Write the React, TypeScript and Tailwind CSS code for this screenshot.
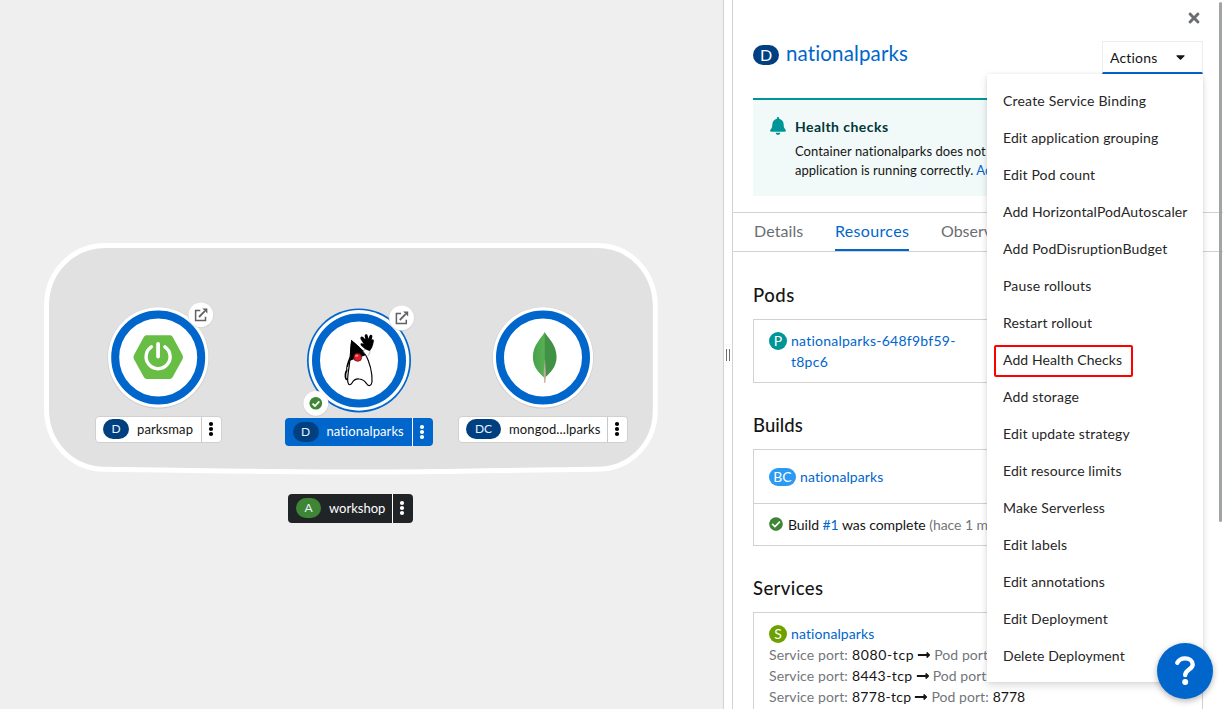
import React from "react";
import { FaBell, FaCheckCircle, FaTimes, FaCaretDown, FaLongArrowAltRight } from "react-icons/fa";

const menuItems: [string, string][] = [
  ["Create Service Binding", "tracking-[0.2px]"],
  ["Edit application grouping", "tracking-[0.12px]"],
  ["Edit Pod count", "tracking-[0.16px]"],
  ["Add HorizontalPodAutoscaler", "tracking-[0.1px]"],
  ["Add PodDisruptionBudget", "tracking-[0.15px]"],
  ["Pause rollouts", "tracking-[0.16px]"],
  ["Restart rollout", "tracking-[0.1px]"],
  ["Add Health Checks", "tracking-[0.1px]"],
  ["Add storage", "tracking-[0.18px]"],
  ["Edit update strategy", "tracking-[0.16px]"],
  ["Edit resource limits", "tracking-[0.1px]"],
  ["Make Serverless", "tracking-[0.15px]"],
  ["Edit labels", "tracking-[0.15px]"],
  ["Edit annotations", "tracking-[0.12px]"],
  ["Edit Deployment", "tracking-[0.1px]"],
  ["Delete Deployment", "tracking-[0.09px]"],
];

function Kebab() {
  return (
    <svg width="6" height="16" viewBox="0 0 6 16" fill="currentColor">
      <circle cx="3" cy="3" r="2.1" />
      <circle cx="3" cy="8" r="2.1" />
      <circle cx="3" cy="13" r="2.1" />
    </svg>
  );
}

function NodeLabel(props: { box: string; badge: string; code: string; name: string; nameClass: string; end: string }) {
  return (
    <div className={"absolute flex items-center rounded-[4px] text-[13px] " + props.box}>
      <span className={"ml-[7px] flex h-5 shrink-0 items-center justify-center rounded-full text-[12px] text-[#e8f1fa] " + props.badge}>{props.code}</span>
      <span className={"ml-2 flex-1 whitespace-nowrap " + props.nameClass}>{props.name}</span>
      <span className={"flex items-center justify-center self-stretch border-l " + props.end}>
        <Kebab />
      </span>
    </div>
  );
}

function OpenUrl({ x, y }: { x: number; y: number }) {
  return (
    <g transform={`translate(${x} ${y})`}>
      <circle r="13" fill="#c9c9c9" opacity="0.55" cy="0.5" />
      <circle r="12.4" fill="#fff" />
      <path d="M-0.5 -4.2H-5.2V5.7H4.7V2" fill="none" stroke="#5f6164" strokeWidth="1.5" />
      <path d="M-1.8 2.2L4 -3.6" stroke="#5f6164" strokeWidth="1.8" />
      <path d="M1.6 -6.4H6.6V-1.4Z" fill="#5f6164" />
    </g>
  );
}

function Ring({ x, y }: { x: number; y: number }) {
  return (
    <g transform={`translate(${x} ${y})`}>
      <circle r="50.8" cy="0.4" fill="#c4c4c4" opacity="0.7" />
      <circle r="50.2" fill="#fff" />
      <circle r="43" fill="#fff" stroke="#06c" strokeWidth="8" />
    </g>
  );
}

function Duke() {
  return (
    <g transform="translate(330 320) scale(0.33333)">
      <path d="M61 112C54 128 50 138 51 150C46 158 45 168 48 177L54 180" fill="none" stroke="#000" strokeWidth="5" />
      <path d="M51 140L56 142L52 156Z" fill="#bbb" />
      <path d="M65 63C61 90 62 110 57 142C54 162 51 178 54 188C56 197 62 195 66 189C72 178 80 176 88 177C98 178 104 182 109 190C115 201 124 198 126 186C127 165 124 135 104 98Z" fill="#fff" stroke="#000" strokeWidth="3.5" />
      <path d="M64 61C60 85 62 100 60 122C72 118 90 112 107 106C96 88 80 72 64 61Z" fill="#000" />
      <path d="M100 94C104 89 106 86 107 79L120 84C121 95 119 104 112 109" fill="#fff" stroke="#777" strokeWidth="1.5" />
      <path d="M106 88L97 80C90 76 90 69 96 70L101 72L92 58C89 51 95 47 100 52L106 58L104 48C104 41 112 41 113 47L116 56L118 48C121 41 128 44 127 50L125 60C129 55 133 59 131 66C129 78 125 88 118 93Z" fill="#000" />
      <circle cx="83" cy="112" r="12" fill="#e2202c" stroke="#3a0a0e" strokeWidth="2" />
      <ellipse cx="80" cy="107" rx="4.500" ry="3.500" fill="#ff8080" />
    </g>
  );
}

function Topology() {
  return (
    <div className="relative w-[723px] shrink-0 overflow-hidden bg-[#efefef]">
      <svg className="absolute inset-0" width="723" height="709" viewBox="0 0 723 709">
        <defs>
          <linearGradient id="leaf" x1="0" x2="1">
            <stop offset="0" stopColor="#47a148" />
            <stop offset="0.48" stopColor="#58b055" />
            <stop offset="0.52" stopColor="#419247" />
            <stop offset="1" stopColor="#3f9143" />
          </linearGradient>
        </defs>
        <path
          d="M46.5 306C46.5 272 72 245.5 106 245.5H597C630 245.5 655 272 655.300 306V411C655 444 630 469 597 469.300C520 470 440 472 359 472C270 472 180 470 104 469.300C72 469 46.500 443 46.500 409Z"
          fill="#e1e1e1"
          stroke="#fff"
          strokeWidth="5"
        />
        <Ring x={158.2} y={357.4} />
        <path d="M147 335.200H169.500C171 335.200 172 335.800 172.700 337L182.500 355C183.100 356.200 183.100 358 182.500 359.200L172.700 377C172 378.300 171 378.900 169.500 378.900H147C145.500 378.900 144.500 378.300 143.800 377L134 359.200C133.400 358 133.400 356.200 134 355L143.800 337C144.500 335.800 145.500 335.200 147 335.200Z" fill="#68bd45" />
        <path d="M151.300 346.800A12 12 0 1 0 164.900 346.800" fill="none" stroke="#fff" strokeWidth="3.400" strokeLinecap="round" />
        <path d="M158.100 343.800V356.500" stroke="#fff" strokeWidth="3.800" strokeLinecap="round" />

        <circle cx="359" cy="360.400" r="52" fill="#06c" />
        <circle cx="359" cy="360.400" r="50.300" fill="#fff" />
        <circle cx="359" cy="360.400" r="43" fill="#fff" stroke="#06c" strokeWidth="8" />
        <Duke />

        <Ring x={543} y={357.4} />
        <path d="M544.600 332C547 337 556.600 344 556.600 357C556.600 367 550 373 545.200 377.500H544.200C539 373 532.900 367 532.900 357C532.900 344 542 338 544.600 332Z" fill="url(#leaf)" />
        <path d="M543.700 372L544.300 383H545.400L545.900 375L545 360H544.700Z" fill="#bfae98" />

        <OpenUrl x={200.8} y={314.8} />
        <OpenUrl x={401.600} y={317.800} />
        <circle cx="315.800" cy="403.800" r="13" fill="#c9c9c9" opacity="0.550" />
        <circle cx="315.800" cy="403.300" r="12.400" fill="#fff" />
        <circle cx="315.800" cy="403.300" r="6.300" fill="#3e8635" />
        <path d="M312.500 403.600L315 406L319.300 401.300" fill="none" stroke="#fff" strokeWidth="1.800" />
      </svg>
      <NodeLabel box="left-[95px] top-[415.5px] h-[27px] w-[126.500px] border border-[#d0d0d0] bg-white text-[#151515]" badge="w-[26px] bg-[#004080]" code="D" name="parksmap" nameClass="pt-px tracking-[0.12px]" end="w-5 border-[#c8c8c8] pr-px text-black" />
      <NodeLabel box="left-[284.5px] top-[418px] h-[28px] w-[148.5px] bg-[#06c] pl-px text-white" badge="w-[26px] bg-[#004080]" code="D" name="nationalparks" nameClass="tracking-[0.08px]" end="w-[21px] border-white pr-[3px] text-white" />
      <NodeLabel box="left-[458px] top-[415.5px] h-[27px] w-[170px] border border-[#d0d0d0] bg-white text-[#151515]" badge="w-[35px] bg-[#004080]" code="DC" name="mongod...lparks" nameClass="pt-px tracking-[0.12px]" end="w-5 border-[#c8c8c8] pr-px text-black" />
      <NodeLabel box="left-[288px] top-[493.5px] h-[29.5px] w-[125px] bg-[#212427] pl-px text-white" badge="w-[25px] bg-[#3e8635]" code="A" name="workshop" nameClass="" end="w-[21px] border-white pr-[3px] text-white" />
    </div>
  );
}

function Section({ title, className, titleClass, children }: { title: string; className: string; titleClass: string; children: React.ReactNode }) {
  return (
    <section className={className}>
      <h2 className={"h-[27px] text-[18.5px] leading-[27px] font-medium text-[#151515] " + titleClass}>{title}</h2>
      <div className="mt-[10px] border border-[#d2d2d2]">{children}</div>
    </section>
  );
}

function Badge({ className, children }: { className: string; children: string }) {
  return <span className={"flex h-[18px] shrink-0 items-center justify-center rounded-full text-[14px] leading-none text-white " + className}>{children}</span>;
}

function PortRow({ port, name, nameClass }: { port: string; name: string; nameClass: string }) {
  return (
    <div className="flex h-[21px] items-center whitespace-nowrap text-[#72767b]">
      <span className="tracking-[0.1px]">Service port:</span>
      <span className={"ml-1 text-[#151515] " + nameClass}>{name}</span>
      <FaLongArrowAltRight className="mr-[3px] ml-[3px] h-[14px] w-[14px] text-[#151515]" />
      <span className="tracking-[0.05px]">Pod port:</span>
      <span className="ml-1 text-[#151515]">{port}</span>
    </div>
  );
}

export default function App() {
  return (
    <div className="relative flex h-[709px] w-[1223px] overflow-hidden bg-white font-['Lato',sans-serif] text-[14px] text-[#151515] [font-variant-ligatures:none]">
      <Topology />
      <div className="flex w-[10px] shrink-0 items-center justify-center gap-[2px] border-x border-[#d2d2d2] bg-white">
        <span className="h-3 w-px bg-[#6a6e73]" />
        <span className="h-3 w-px bg-[#6a6e73]" />
      </div>
      <aside className="flex min-w-0 flex-1 flex-col">
        <header className="flex h-[98px] shrink-0 items-start justify-between px-5">
          <div className="mt-[41px] flex h-[28px] items-center">
            <span className="flex h-5 w-[26px] items-center justify-center rounded-full bg-[#004080] text-[16px] text-white">D</span>
            <h1 className="ml-[7px] pb-[4px] text-[20.5px] leading-[26px] tracking-[0.14px] text-[#06c]">nationalparks</h1>
          </div>
          <div className="flex flex-col items-end">
            <FaTimes className="mt-[10px] mr-[1px] h-4 w-4 text-[#6a6e73]" />
            <button className="mt-[15px] flex h-[33px] w-[101px] items-center justify-between border border-b-2 border-[#ededed] border-b-[#06c] pr-[16px] pl-[7px] tracking-[0.18px]">
              Actions
              <FaCaretDown className="h-[14px] w-[11px]" />
            </button>
          </div>
        </header>
        <div className="mx-5 flex h-[98px] shrink-0 border-t-2 border-[#009596] bg-[#f2f9f9] pl-[17px]">
          <FaBell className="mt-[17px] h-[18px] w-4 text-[#009596]" />
          <div className="ml-[9px] whitespace-nowrap">
            <h4 className="mt-[16px] leading-[22px] font-bold tracking-[0.45px] text-[#003737]">Health checks</h4>
            <p className="mt-[4px] text-[13px] leading-[19px] tracking-[0.07px]">Container nationalparks does not have</p>
            <p className="text-[13px] leading-[19px] tracking-[0.03px]">application is running correctly. <a className="text-[#06c]">Add health</a></p>
          </div>
        </div>
        <nav className="mt-4 flex h-10 shrink-0 gap-8 border-y border-[#d2d2d2] pl-[21px] text-[16px] leading-[36px] text-[#6a6e73]">
          <span className="w-[49px] tracking-[0.1px]">Details</span>
          <span className="h-[38px] w-[74px] border-b-2 border-[#06c] tracking-[0.33px] text-[#06c]">Resources</span>
          <span>Observe</span>
        </nav>
        <div className="px-5">
          <Section title="Pods" className="mt-[30px]" titleClass="tracking-[0.5px]">
            <div className="flex h-[62px] pt-[10px] pl-[15px]">
              <Badge className="mt-[2px] w-[18px] bg-[#009596]">P</Badge>
              <a className="ml-1 w-[180px] leading-[21px] tracking-[0.24px] text-[#06c]">nationalparks-648f9bf59-<br />t8pc6</a>
            </div>
          </Section>
          <Section title="Builds" className="mt-[29px]" titleClass="tracking-[0.05px]">
            <div className="flex h-[54px] items-center border-b border-[#d2d2d2] pl-[15px]">
              <Badge className="w-[27px] bg-[#2b9af3]">BC</Badge>
              <a className="ml-1 tracking-[0.1px] text-[#06c]">nationalparks</a>
            </div>
            <div className="flex h-[41px] items-center pl-[15px] whitespace-pre">
              <FaCheckCircle className="mr-[5px] mb-[2px] h-[14px] w-[14px] text-[#3e8635]" />
              <span className="tracking-[-0.05px]">Build <a className="text-[#06c]">#1</a> was complete <span className="text-[#72767b]">(hace 1 minuto)</span></span>
            </div>
          </Section>
          <Section title="Services" className="mt-[29px]" titleClass="tracking-[0.4px]">
            <div className="h-[120px] pt-[10px] pl-[15px]">
              <div className="flex h-[21px] items-center">
                <Badge className="mt-px w-[18px] bg-[#6ca100]">S</Badge>
                <a className="ml-1 tracking-[0.1px] text-[#06c]">nationalparks</a>
              </div>
              <PortRow name="8080-tcp" port="8080" nameClass="tracking-[0.65px]" />
              <PortRow name="8443-tcp" port="8443" nameClass="tracking-[0.45px]" />
              <PortRow name="8778-tcp" port="8778" nameClass="tracking-[0.3px]" />
            </div>
          </Section>
        </div>
      </aside>
      <ul className="absolute top-[74px] left-[987px] h-[608px] w-[216px] bg-white py-2 text-[#262626] shadow-[0_4px_8px_rgba(3,3,3,0.12),0_0_4px_rgba(3,3,3,0.08)]">
        {menuItems.map(([label, tracking]) => (
          <li key={label} className={"flex h-[37px] items-center pl-4 whitespace-nowrap " + tracking}>{label}</li>
        ))}
      </ul>
      <div className="absolute top-[345px] left-[994px] h-[32px] w-[139px] rounded-[2px] border-2 border-[#f00]" />
      <div className="absolute top-[2px] left-[1219px] h-[520px] w-[3px] rounded-full bg-[#a0a4a2]" />
      <button className="absolute top-[643px] left-[1157px] flex h-14 w-14 items-center justify-center rounded-full bg-[#06c] shadow-[0_2px_6px_rgba(0,0,0,0.3)]">
        <svg width="24" height="32" viewBox="0 0 24 32" fill="none" stroke="#fff" strokeLinecap="round">
          <path d="M4.300 7.800C6 4.500 9 3.400 12 3.400C16.500 3.400 19.700 6 19.700 9.400C19.700 14.500 12.200 14.500 12.200 20" strokeWidth="4.400" />
          <circle cx="12.200" cy="27" r="3" fill="#fff" stroke="none" />
        </svg>
      </button>
    </div>
  );
}
